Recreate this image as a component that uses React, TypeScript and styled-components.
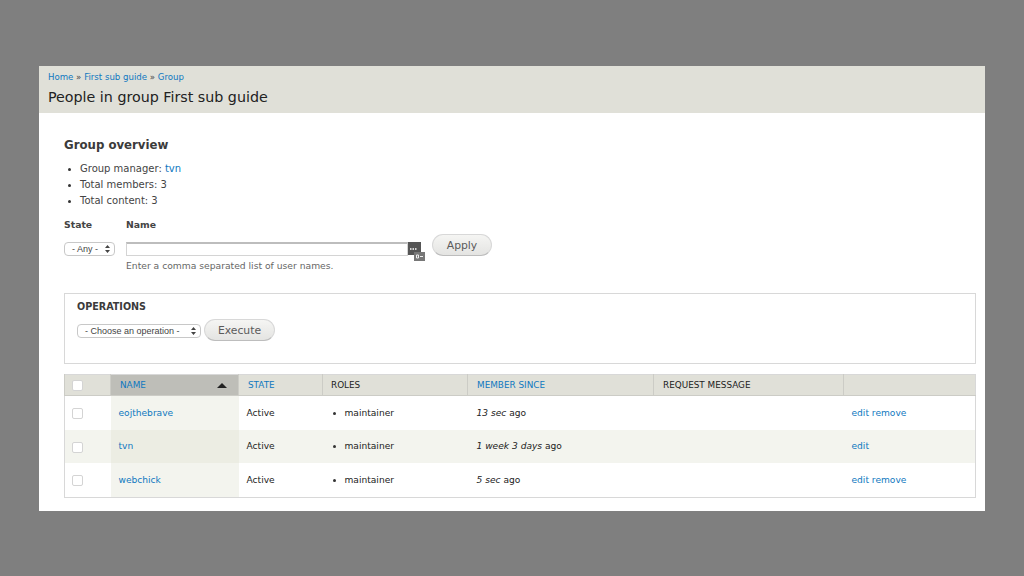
import React from "react";
import styled, { createGlobalStyle } from "styled-components";

const Global = createGlobalStyle`
  html, body { margin: 0; padding: 0; background: #7f7f7f; }
  body { font-family: "DejaVu Sans", Verdana, sans-serif; color: #333; height: 576px; overflow: hidden; }
  * { box-sizing: border-box; }
`;
const Page = styled.div`padding: 66px 39px 0 39px;`;
const Sheet = styled.div`width: 946px; height: 445px; background: #fff; display: flex; flex-direction: column;`;
const Head = styled.header`height: 47px; background: #e0e0d8; padding: 5px 9px 0; display: flex; flex-direction: column;`;
const Crumbs = styled.div`font-size: 8.6px; line-height: 13px; color: #444;`;
const Title = styled.h1`margin: 4px 0 0; font-size: 14.25px; line-height: 18px; font-weight: 400; color: #222;`;
const Body = styled.main`padding: 24px 9px 0 25px; display: flex; flex-direction: column;`;
const H2 = styled.h2`margin: 0; font-size: 11.75px; line-height: 16px; font-weight: 700; color: #3b3b3b;`;
const Bullets = styled.ul`list-style: none; margin: 0; padding: 0;`;
const Item = styled.li<{ $gap: number }>`position: relative; padding-left: ${p => p.$gap}px;
  &::before { content: ""; position: absolute; left: ${p => p.$gap - 12}px; top: calc(50% - 1px); width: 3px; height: 3px; border-radius: 50%; background: #333; }`;
const Facts = styled(Bullets)`margin-top: 8px; font-size: 10px; line-height: 16px; color: #444;`;
const Link = styled.a`color: #0f78c0; text-decoration: none;`;
const Filters = styled.div`display: flex; margin-top: 9px; height: 74px;`;
const StateCol = styled.div`width: 62px; display: flex; flex-direction: column;`;
const NameCol = styled.div`width: 306px; display: flex; flex-direction: column;`;
const FLabel = styled.div`font-size: 9.3px; line-height: 14px; font-weight: 700; color: #444;`;
const Select = styled.div<{ $w: number }>`width: ${p => p.$w}px; height: 14px; margin-top: 10px; border: 1px solid #c8c8c8; border-radius: 4px;
  background: #fff; font-family: "Liberation Sans", Arial, sans-serif; font-size: 9px; line-height: 12px; color: #444; padding-left: 7px; position: relative;`;
const Arrows = styled.svg`position: absolute; right: 4px; top: 2px;`;
const Input = styled.div`position: relative; width: 282px; height: 14px; margin-top: 10px; border: 1px solid #d4d4d4; border-top: 2px solid #bdbdbd; background: #fff;`;
const Auto = styled.svg`position: absolute; right: -19px; top: -2px;`;
const Hint = styled.div`font-size: 9.2px; line-height: 13px; margin-top: 3px; color: #666;`;
const Pill = styled.button<{ $w: number; $mt: number }>`width: ${p => p.$w}px; height: 22px; margin-top: ${p => p.$mt}px; border: 1px solid #d8d8d8; border-bottom-color: #bdbdbd; border-radius: 11px;
  background: linear-gradient(#f5f5f3, #e4e4e2); font-family: inherit; font-size: 10.8px; color: #5a5a5a; padding: 0; flex: none;`;
const Ops = styled.section`height: 71px; width: 912px; margin-top: 1px; border: 1px solid #d8d8d8; padding: 6px 12px;`;
const OpsTitle = styled.div`font-size: 9.6px; line-height: 14px; font-weight: 700; color: #3b3b3b;`;
const OpsRow = styled.div`display: flex; gap: 3px; align-items: flex-start; margin-top: 5px;`;
const OpSelect = styled(Select)`margin-top: 5px;`;
const Table = styled.table`width: 912px; margin-top: 10px; table-layout: fixed; border-collapse: collapse; border: 1px solid #d8d8d8; font-size: 9.1px; color: #222;`;
const Th = styled.th<{ $active?: boolean; $pad?: number }>`height: 21px; padding: 0 0 0 ${p => p.$pad ?? 9}px; text-align: left; font-weight: 400; font-size: 8.85px; background: ${p => p.$active ? "#bebeb8" : "#e0e0d8"};
  border-left: 1px solid #ccccc6; border-bottom: 1px solid #ccccc6; position: relative; color: #222;`;
const Sort = styled.span`position: absolute; right: 11px; top: 8px; width: 0; height: 0; border: 5px solid transparent; border-top: 0; border-bottom: 5px solid #222;`;
const Tr = styled.tr<{ $alt?: boolean; $h: number }>`height: ${p => p.$h}px; background: ${p => p.$alt ? "#f3f4ee" : "#fff"};`;
const Td = styled.td<{ $active?: boolean; $alt?: boolean; $pad?: number }>`padding: 0 0 0 ${p => p.$pad ?? 8}px; background: ${p => p.$active ? (p.$alt ? "#ecede3" : "#f3f4ee") : "transparent"};`;
const Check = styled.span<{ $low?: boolean }>`display: block; width: 11px; height: 11px; margin-top: ${p => p.$low ? 2 : 0}px; border: 1px solid #d4d4d4; border-radius: 2px; background: #fff;`;
const Em = styled.em`font-style: italic;`;

const ArrowIcon = () => (
  <Arrows width="5" height="8" viewBox="0 0 5 8"><path d="M2.5 0L5 3H0zM2.5 8L0 5h5z" fill="#444" /></Arrows>
);

const rows = [
  { n: "eojthebrave", t: "13 sec", a: "edit remove", h: 34 },
  { n: "tvn", t: "1 week 3 days", a: "edit", h: 33, alt: true },
  { n: "webchick", t: "5 sec", a: "edit remove", h: 35 },
];

export default function App() {
  return (
    <Page>
      <Global />
      <Sheet>
        <Head>
          <Crumbs><Link>Home</Link> » <Link>First sub guide</Link> » <Link>Group</Link></Crumbs>
          <Title>People in group First sub guide</Title>
        </Head>
        <Body>
          <H2>Group overview</H2>
          <Facts>
            <Item $gap={16}>Group manager: <Link>tvn</Link></Item>
            <Item $gap={16}>Total members: 3</Item>
            <Item $gap={16}>Total content: 3</Item>
          </Facts>
          <Filters>
            <StateCol>
              <FLabel>State</FLabel>
              <Select $w={51}>- Any -<ArrowIcon /></Select>
            </StateCol>
            <NameCol>
              <FLabel>Name</FLabel>
              <Input>
                <Auto width="18" height="19" viewBox="0 0 18 19">
                  <rect x="0" y="0" width="13" height="13" fill="#555" />
                  <rect x="6" y="10" width="11" height="9" fill="#777" />
                  <path d="M2 7h1.5M4.5 7H6M7 7h1.5" stroke="#fff" strokeWidth="1.4" />
                  <path d="M8.5 13h2v3h-2zM12 14.5h3" stroke="#eee" strokeWidth="1" fill="none" />
                </Auto>
              </Input>
              <Hint>Enter a comma separated list of user names.</Hint>
            </NameCol>
            <Pill $w={60} $mt={16}>Apply</Pill>
          </Filters>
          <Ops>
            <OpsTitle>OPERATIONS</OpsTitle>
            <OpsRow>
              <OpSelect $w={124}>- Choose an operation -<ArrowIcon /></OpSelect>
              <Pill $w={71} $mt={0}>Execute</Pill>
            </OpsRow>
          </Ops>
          <Table>
            <colgroup>
              <col style={{ width: 46 }} /><col style={{ width: 128 }} /><col style={{ width: 84 }} /><col style={{ width: 145 }} /><col style={{ width: 186 }} /><col style={{ width: 190 }} /><col />
            </colgroup>
            <thead>
              <tr>
                <Th $pad={7}><Check /></Th>
                <Th $active><Link>NAME</Link><Sort /></Th>
                <Th><Link>STATE</Link></Th>
                <Th $pad={8}>ROLES</Th>
                <Th><Link>MEMBER SINCE</Link></Th>
                <Th>REQUEST MESSAGE</Th>
                <Th />
              </tr>
            </thead>
            <tbody>
              {rows.map(r => (
                <Tr key={r.n} $alt={r.alt} $h={r.h}>
                  <Td $pad={7}><Check $low /></Td>
                  <Td $active $alt={r.alt}><Link>{r.n}</Link></Td>
                  <Td>Active</Td>
                  <Td><Bullets><Item $gap={14}>maintainer</Item></Bullets></Td>
                  <Td $pad={9}><Em>{r.t}</Em> ago</Td>
                  <Td />
                  <Td><Link>{r.a}</Link></Td>
                </Tr>
              ))}
            </tbody>
          </Table>
        </Body>
      </Sheet>
    </Page>
  );
}
